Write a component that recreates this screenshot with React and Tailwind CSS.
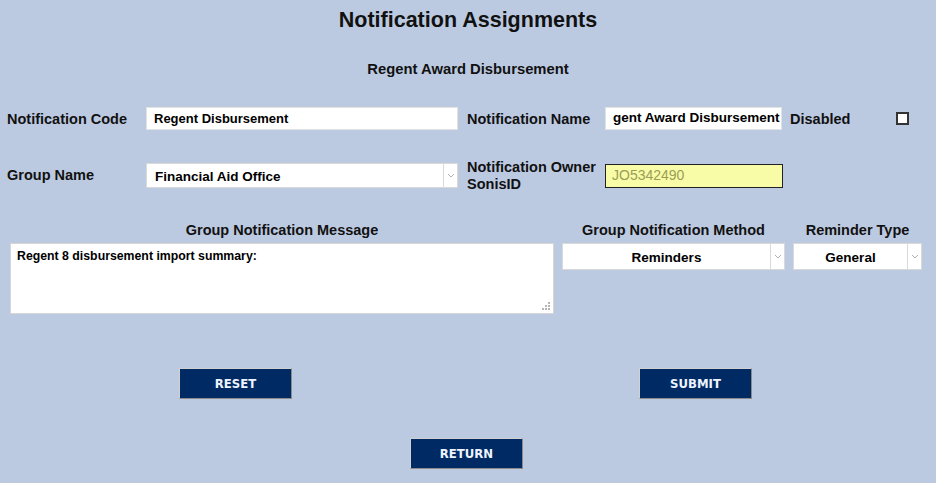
const font = { fontFamily: '"Liberation Sans", Arial, sans-serif' }
const btnFont = { fontFamily: '"DejaVu Sans Condensed", "DejaVu Sans", Tahoma, sans-serif' }

function Chevron() {
  return (
    <svg width="8" height="5" viewBox="0 0 8 5" className="block">
      <path d="M1 1 L4 4 L7 1" fill="none" stroke="#b0b0b0" strokeWidth="1" />
    </svg>
  )
}

function FakeSelect({ value, className, center }) {
  return (
    <div className={`flex bg-white border border-[#d9d9d9] ${className}`}>
      <div className={`flex-1 flex items-center pt-[3px] text-[13.5px] font-bold text-black ${center ? 'justify-center' : 'pl-[8px]'}`}>
        {value}
      </div>
      <div className="w-[14px] border-l border-[#d9d9d9] flex items-center justify-center">
        <Chevron />
      </div>
    </div>
  )
}

function NavyButton({ label }) {
  return (
    <button
      className="w-[113px] h-[31px] bg-[#002a63] border border-t-[#d0d0d0] border-l-[#d0d0d0] border-r-[#8a8a8a] border-b-[#8a8a8a] text-[#eef4ff] text-[13px] font-bold"
      style={btnFont}
    >
      {label}
    </button>
  )
}

export default function App() {
  return (
    <div className="w-[936px] h-[483px] bg-[#bccae1] text-[#111] overflow-hidden" style={font}>
      <h1 className="pt-[7px] text-center text-[21.5px] font-bold leading-[26px]">Notification Assignments</h1>
      <p className="mt-[27px] text-center text-[14.8px] font-bold leading-[18px]">Regent Award Disbursement</p>

      {/* row 1 */}
      <div className="mt-[29px] flex items-center h-[23px]">
        <label className="pl-[7px] pt-[2px] w-[146px] text-[14.5px] font-bold">Notification Code</label>
        <div className="w-[312px] h-[23px] bg-white border border-[#e2e2e2] flex items-center pl-[7px] text-[13px] font-bold text-black">
          Regent Disbursement
        </div>
        <label className="ml-[9px] pt-[2px] w-[138px] text-[14.5px] font-bold">Notification Name</label>
        <div className="w-[177px] h-[23px] bg-white border border-[#e2e2e2] flex items-center overflow-hidden whitespace-nowrap text-[13.5px] font-bold text-black">
          <span className="pl-[7px]">gent Award Disbursement</span>
        </div>
        <label className="ml-[8px] pt-[2px] w-[106px] text-[14.5px] font-bold">Disabled</label>
        <div className="w-[13px] h-[13px] bg-white border-2 border-[#333]" />
      </div>

      {/* row 2 */}
      <div className="mt-[33px] flex items-center h-[25px]">
        <label className="pl-[7px] w-[146px] text-[14.5px] font-bold">Group Name</label>
        <FakeSelect value="Financial Aid Office" className="w-[312px] h-[25px]" />
        <label className="ml-[9px] w-[138px] text-[14.5px] font-bold leading-[17px]">
          Notification Owner<br />SonisID
        </label>
        <div className="w-[178px] h-[24px] bg-[#f8fca6] border border-[#222] flex items-center pl-[6px] text-[14px] text-[#9c9c58]">
          JO5342490
        </div>
      </div>

      {/* row 3 */}
      <div className="mt-[34px] flex">
        <div className="ml-[10px] w-[544px] flex flex-col">
          <div className="text-center text-[14.5px] font-bold leading-[17px]">Group Notification Message</div>
          <div className="relative mt-[4px] h-[71px] bg-white border border-[#d6d6d6] pl-[6px] pt-[3px] text-[12.3px] font-bold text-black">
            Regent 8 disbursement import summary:
            <svg width="8" height="8" viewBox="0 0 8 8" className="absolute right-[3px] bottom-[3px]">
              <rect x="6" y="0" width="2" height="2" fill="#b5b5b5" />
              <rect x="3" y="3" width="2" height="2" fill="#b5b5b5" />
              <rect x="6" y="3" width="2" height="2" fill="#b5b5b5" />
              <rect x="0" y="6" width="2" height="2" fill="#b5b5b5" />
              <rect x="3" y="6" width="2" height="2" fill="#b5b5b5" />
              <rect x="6" y="6" width="2" height="2" fill="#b5b5b5" />
            </svg>
          </div>
        </div>
        <div className="ml-[8px] w-[223px] flex flex-col">
          <div className="text-center text-[14.5px] font-bold leading-[17px]">Group Notification Method</div>
          <FakeSelect value="Reminders" center className="mt-[4px] h-[27px]" />
        </div>
        <div className="ml-[8px] w-[129px] flex flex-col">
          <div className="text-center text-[14.5px] font-bold leading-[17px]">Reminder Type</div>
          <FakeSelect value="General" center className="mt-[4px] h-[27px]" />
        </div>
      </div>

      {/* buttons */}
      <div className="mt-[54px] flex pl-[179px] gap-[347px]">
        <NavyButton label="RESET" />
        <NavyButton label="SUBMIT" />
      </div>
      <div className="mt-[39px] flex pl-[410px]">
        <NavyButton label="RETURN" />
      </div>
    </div>
  )
}
